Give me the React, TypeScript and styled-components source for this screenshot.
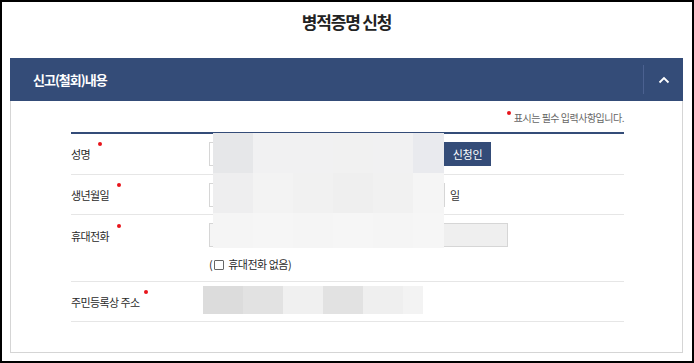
import styled, { createGlobalStyle } from "styled-components";

const GlobalStyle = createGlobalStyle`
  html, body {
    margin: 0;
    padding: 0;
    background: #fff;
  }
  * {
    box-sizing: border-box;
  }
  body {
    font-family: "Noto Sans CJK KR", "Noto Sans", sans-serif;
    color: #333;
  }
`;

const NAVY = "#344c78";

const Frame = styled.div`
  width: 694px;
  height: 363px;
  border: 2px solid #000;
  padding: 0 9px 0 8px;
  overflow: hidden;
`;
const PageTitle = styled.h1`
  margin: 0;
  height: 56px;
  padding-top: 7px;
  text-align: center;
  font-size: 17px;
  font-weight: 700;
  letter-spacing: -1.2px;
  color: #222;
`;
const SectionHead = styled.div`
  height: 43px;
  background: ${NAVY};
  display: flex;
  align-items: center;
`;
const SectionTitle = styled.h2`
  flex: 1;
  margin: 0;
  padding-left: 23px;
  font-size: 13px;
  font-weight: 700;
  letter-spacing: -1px;
  color: #fff;
`;
const Toggle = styled.button`
  width: 40px;
  height: 29px;
  border: 0;
  border-left: 1px solid #4b6190;
  background: transparent;
  display: flex;
  align-items: center;
  justify-content: center;
  padding: 0 0 0 1px;
`;
const Panel = styled.div`
  border: 1px solid #d5d5d5;
  border-top: 0;
  padding: 10px 58px 30px 60px;
  height: 252px;
`;
const Note = styled.p`
  margin: 0 0 7px;
  text-align: right;
  font-size: 10px;
  letter-spacing: -0.5px;
  color: #666;
  line-height: 14px;
`;
const Dot = styled.span<{ $gap?: number }>`
  display: inline-block;
  width: 4px;
  height: 4px;
  border-radius: 50%;
  background: #e8141b;
  vertical-align: top;
  margin-left: ${(p) => p.$gap ?? 6}px;
  margin-top: ${(p) => (p.$gap === 0 ? 0 : -5)}px;
  margin-right: ${(p) => (p.$gap === 0 ? 3 : 0)}px;
`;
const Table = styled.div`
  position: relative;
  border-top: 2px solid ${NAVY};
`;
const Row = styled.div<{ $h: number }>`
  display: flex;
  align-items: center;
  min-height: ${(p) => p.$h}px;
  border-bottom: 1px solid #e6e6e6;
`;
const Label = styled.div<{ $top?: number }>`
  width: 138px;
  font-size: 11px;
  letter-spacing: -0.6px;
  color: #2a2a2a;
  line-height: 14px;
  align-self: flex-start;
  padding-top: ${(p) => p.$top ?? 13}px;
`;
const Value = styled.div<{ $shift?: number }>`
  flex: 1;
  display: flex;
  align-items: center;
  gap: 4px;
  margin-top: ${(p) => p.$shift ?? 0}px;
`;
const Stack = styled.div`
  flex: 1;
  align-self: flex-start;
  display: flex;
  flex-direction: column;
  gap: 10px;
  padding-top: 8px;
`;
const Field = styled.div<{ $w: number; $bg?: string }>`
  width: ${(p) => p.$w}px;
  height: 24px;
  border: 1px solid #d6d6d6;
  background: ${(p) => p.$bg ?? "#fff"};
`;
const Fields = styled.div`
  display: flex;
  gap: 23px;
`;
const SmallBtn = styled.button`
  height: 24px;
  width: 47px;
  border: 0;
  background: ${NAVY};
  color: #fff;
  font-family: inherit;
  font-size: 11px;
  letter-spacing: -0.3px;
  padding: 0;
`;
const Unit = styled.span`
  font-size: 11px;
  color: #333;
  margin-left: 1px;
`;
const CheckLine = styled.label`
  display: flex;
  align-items: center;
  font-size: 11px;
  letter-spacing: -0.5px;
  color: #2a2a2a;
  line-height: 14px;
`;
const Box = styled.span`
  display: inline-block;
  width: 10px;
  height: 10px;
  border: 1px solid #666;
  border-radius: 1px;
  margin: 1px 4px 0 2px;
`;
const Mosaic = styled.div`
  position: absolute;
  left: 142px;
  top: -1px;
  width: 231px;
  display: grid;
  grid-template-columns: 40px 40px 40px 40px 40px 31px;
  grid-template-rows: 40px 40px 35px;
`;
const Tile = styled.div<{ $c: string }>`
  background: ${(p) => p.$c};
`;
const Strip = styled.div`
  display: flex;
  margin-left: -6px;
  height: 28px;
`;
const StripTile = styled.div<{ $c: string; $w: number }>`
  width: ${(p) => p.$w}px;
  background: ${(p) => p.$c};
`;

const tiles = [
  "#e6e7e9", "#f1f1f2", "#f1f1f2", "#f1f1f1", "#f1f1f2", "#e9eaee",
  "#eeeeef", "#f3f3f3", "#f1f1f1", "#efefef", "#f1f1f1", "#f5f5f5",
  "#f5f5f5", "#f6f6f6", "#f5f5f5", "#f6f6f6", "#f5f5f5", "#f6f6f6",
];
const strip = ["#dcdcdc", "#e2e2e2", "#f0f0f0", "#e2e2e2", "#efefef", "#f3f3f3"];

function Chevron() {
  return (
    <svg width="12" height="8" viewBox="0 0 12 8">
      <path d="M1.5 6.5 L6 2 L10.5 6.5" fill="none" stroke="#fff" strokeWidth="1.8" />
    </svg>
  );
}

function App() {
  return (
    <>
      <GlobalStyle />
      <Frame>
        <PageTitle>병적증명 신청</PageTitle>
        <SectionHead>
          <SectionTitle>신고(철회)내용</SectionTitle>
          <Toggle aria-label="접기">
            <Chevron />
          </Toggle>
        </SectionHead>
        <Panel>
          <Note>
            <Dot $gap={0} />
            표시는 필수 입력사항입니다.
          </Note>
          <Table>
            <Row $h={41}>
              <Label>
                성명
                <Dot $gap={8} />
              </Label>
              <Value>
                <Field $w={231} />
                <SmallBtn>신청인</SmallBtn>
              </Value>
            </Row>
            <Row $h={40}>
              <Label>
                생년월일
                <Dot $gap={8} />
              </Label>
              <Value>
                <Field $w={236} />
                <Unit>일</Unit>
              </Value>
            </Row>
            <Row $h={67}>
              <Label $top={14}>
                휴대전화
                <Dot $gap={8} />
              </Label>
              <Stack>
                <Fields>
                  <Field $w={89} $bg="#f5f5f5" />
                  <Field $w={77} $bg="#f5f5f5" />
                  <Field $w={87} $bg="#efefef" />
                </Fields>
                <CheckLine>
                  (<Box />휴대전화 없음)
                </CheckLine>
              </Stack>
            </Row>
            <Row $h={40}>
              <Label>
                주민등록상 주소
                <Dot $gap={4} />
              </Label>
              <Value $shift={-4}>
                <Strip>
                  {strip.map((c, i) => (
                    <StripTile key={i} $c={c} $w={i === 5 ? 20 : 40} />
                  ))}
                </Strip>
              </Value>
            </Row>
            <Mosaic>
              {tiles.map((c, i) => (
                <Tile key={i} $c={c} />
              ))}
            </Mosaic>
          </Table>
        </Panel>
      </Frame>
    </>
  );
}

export default App;
